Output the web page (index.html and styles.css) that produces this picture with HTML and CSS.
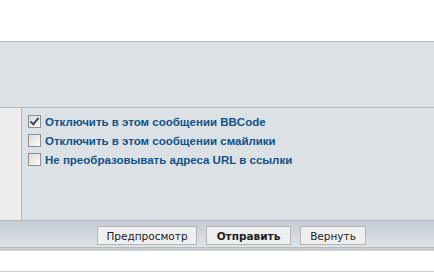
FILE: index.html
```html
<!DOCTYPE html>
<html lang="ru">
<head>
  <meta charset="UTF-8">
  <title>Ответ</title>
  <link rel="stylesheet" href="styles.css">
</head>
<body>
  <div class="panel">
    <div class="panel-top"></div>
    <div class="panel-row">
      <div class="row-label"></div>
      <div class="row-options">
        <label class="opt"><input type="checkbox" checked> Отключить в этом сообщении BBCode</label>
        <label class="opt"><input type="checkbox"> Отключить в этом сообщении смайлики</label>
        <label class="opt"><input type="checkbox"> Не преобразовывать адреса URL в ссылки</label>
      </div>
    </div>
    <div class="toolbar">
      <button class="btn btn-preview">Предпросмотр</button>
      <button class="btn btn-main">Отправить</button>
      <button class="btn btn-reset">Вернуть</button>
    </div>
    <div class="toolbar-foot"></div>
  </div>
  <div class="after"></div>
</body>
</html>
```

FILE: styles.css
```css
/* Page */
html, body {
  margin: 0;
  padding: 0;
  background: #ffffff;
  font-family: "Liberation Sans", Arial, sans-serif;
}
body {
  padding-top: 41px;
}

/* Posting panel */
.panel {
  border-top: 1px solid #b4bac0;
  background: #dce1e5;
}
.panel-top {
  height: 65px;
  border-bottom: 1px solid #b4bac0;
}
.panel-row {
  display: flex;
  height: 112px;
}
.row-label {
  width: 21px;
  background: #ececec;
  border-right: 1px solid #b4bac0;
}
.row-options {
  display: flex;
  flex-direction: column;
  gap: 6px;
  padding: 7px 0 0 6px;
}
.opt {
  display: flex;
  align-items: center;
  height: 13px;
  font-size: 11.5px;
  font-weight: bold;
  color: #105289;
  white-space: nowrap;
}
.opt input {
  appearance: none;
  width: 13px;
  height: 13px;
  margin: 0 4px 0 0;
  border: 1px solid #8e8f8f;
  background: linear-gradient(135deg, #dcdcdc, #fbfbfb);
  position: relative;
}
.opt input:checked::after {
  content: "";
  position: absolute;
  left: 3px;
  top: 0px;
  width: 3px;
  height: 7px;
  border: solid #3c4a6a;
  border-width: 0 2px 2px 0;
  transform: rotate(40deg);
}

/* Buttons bar */
.toolbar {
  display: flex;
  justify-content: center;
  gap: 9px;
  height: 26px;
  padding-left: 29px;
  align-items: center;
  border-top: 1px solid #b4bac0;
  background: linear-gradient(#c4ccd4, #dfe3e8);
}
.toolbar-foot {
  height: 3px;
  background: #c8ced4;
  border-top: 1px solid #b4bac0;
}
.btn {
  height: 19px;
  padding: 0;
  font-family: "DejaVu Sans", Tahoma, sans-serif;
  font-size: 10.5px;
  color: #222;
  background: #efefef;
  border: 1px solid #b4b4b4;
  margin-top: 3px;
}
.btn-preview {
  width: 100px;
}
.btn-main {
  width: 85px;
  font-weight: bold;
}
.btn-reset {
  width: 66px;
}
.after {
  height: 20px;
  border-bottom: 1px solid #c8ced4;
}
```
